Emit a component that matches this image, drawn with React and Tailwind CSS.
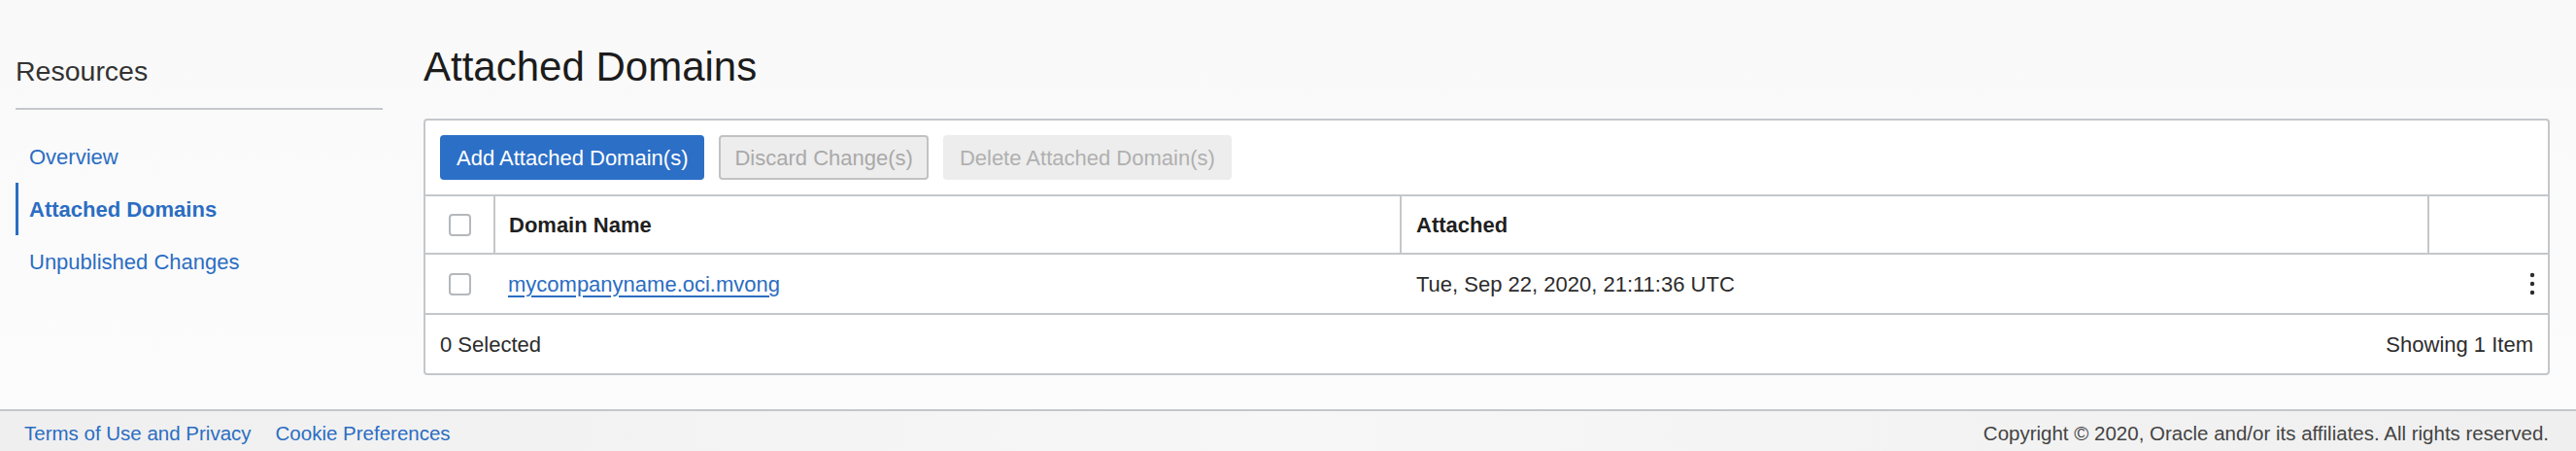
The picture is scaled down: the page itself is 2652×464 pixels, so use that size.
import React from 'react';

const font = { fontFamily: '"Liberation Sans", Arial, sans-serif' };

function Checkbox() {
  return <span className="block w-[23px] h-[23px] rounded-[4px] border-2 border-[#b4b8bc] bg-white" />;
}

function Kebab() {
  return (
    <svg width="6" height="24" viewBox="0 0 6 24" className="text-[#2c2c2c]">
      <circle cx="3" cy="3" r="2.2" fill="currentColor" />
      <circle cx="3" cy="12" r="2.2" fill="currentColor" />
      <circle cx="3" cy="21" r="2.2" fill="currentColor" />
    </svg>
  );
}

function Sidebar() {
  return (
    <aside className="ml-[16px] w-[378px] pt-[56px] shrink-0">
      <h2 className="text-[28.5px] leading-[34px] text-[#333333]">Resources</h2>
      <div className="mt-[21px] h-[2px] bg-[#c4c7ca]" />
      <nav className="mt-[21px] flex flex-col text-[22px] text-[#2b6dc2]">
        <a className="h-[54px] flex items-center pl-[14px]">Overview</a>
        <a className="h-[54px] flex items-center pl-[11px] border-l-[3px] border-[#2b6dc2] font-bold">
          Attached Domains
        </a>
        <a className="h-[54px] flex items-center pl-[14px]">Unpublished Changes</a>
      </nav>
    </aside>
  );
}

function DomainsTable() {
  return (
    <div className="mt-[29px] bg-white border-2 border-[#c4c7ca] rounded-[4px] text-[22px] text-[#2c2c2c]">
      <div className="flex gap-[15px] px-[15px] pt-[15px] pb-[15px] border-b-2 border-[#c4c7ca]">
        <button className="h-[46px] px-[17px] rounded-[4px] bg-[#2c6fc7] text-white">
          Add Attached Domain(s)
        </button>
        <button className="h-[46px] px-[14px] rounded-[4px] bg-[#ededed] border-2 border-[#c2c2c2] text-[#a9a9a9]">
          Discard Change(s)
        </button>
        <button className="h-[46px] px-[17px] rounded-[4px] bg-[#ededed] text-[#b0b0b0]">
          Delete Attached Domain(s)
        </button>
      </div>
      <div className="grid grid-cols-[70px_933px_1058px_1fr] h-[60px] border-b-2 border-[#c4c7ca] font-bold text-[#1f1f1f]">
        <div className="flex items-center justify-center">
          <Checkbox />
        </div>
        <div className="flex items-center pl-[14px] border-l-2 border-[#c4c7ca]">Domain Name</div>
        <div className="flex items-center pl-[15px] border-l-2 border-[#c4c7ca]">Attached</div>
        <div className="border-l-2 border-[#c4c7ca]" />
      </div>
      <div className="grid grid-cols-[70px_933px_1058px_1fr] h-[62px] border-b-2 border-[#c4c7ca]">
        <div className="flex items-center justify-center">
          <Checkbox />
        </div>
        <div className="flex items-center pl-[15px]">
          <a className="text-[#2b6dc2] underline underline-offset-[4px]">mycompanyname.oci.mvong</a>
        </div>
        <div className="flex items-center pl-[17px]">Tue, Sep 22, 2020, 21:11:36 UTC</div>
        <div className="flex items-center justify-end pr-[13px]">
          <Kebab />
        </div>
      </div>
      <div className="flex items-center justify-between h-[60px] px-[15px]">
        <span>0 Selected</span>
        <span>Showing 1 Item</span>
      </div>
    </div>
  );
}

export default function App() {
  return (
    <div className="w-[2652px] h-[464px] flex flex-col bg-[#fafafa]" style={font}>
      <div className="flex flex-1 bg-gradient-to-b from-[#f9f9f9] to-[#fcfcfc]">
        <Sidebar />
        <main className="ml-[42px] mr-[27px] flex-1 pt-[45px]">
          <h1 className="text-[42px] leading-[48px] text-[#1c1c1c]">Attached Domains</h1>
          <DomainsTable />
        </main>
      </div>
      <footer className="h-[43px] border-t-2 border-[#c4c7ca] bg-gradient-to-r from-[#efefef] via-[#f7f7f7] to-[#efefef] flex items-center justify-between pl-[25px] pr-[28px] pt-[6px] text-[20.5px]">
        <div className="flex gap-[25px] text-[#2b6dc2]">
          <a>Terms of Use and Privacy</a>
          <a>Cookie Preferences</a>
        </div>
        <span className="text-[#444444]">Copyright © 2020, Oracle and/or its affiliates. All rights reserved.</span>
      </footer>
    </div>
  );
}
